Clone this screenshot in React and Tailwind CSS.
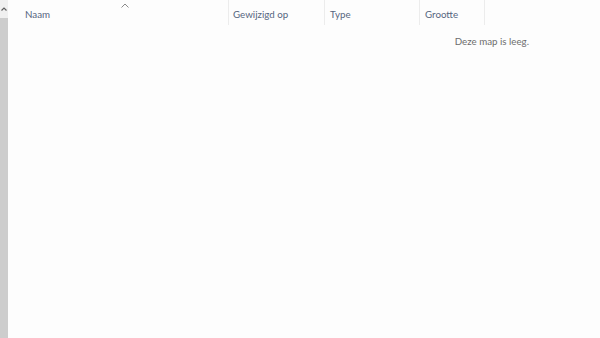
import React from 'react';

const columns = [
  { label: 'Naam', width: 'w-[221px]', pad: 'pl-[17px]' },
  { label: 'Gewijzigd op', width: 'w-[96px]', pad: 'pl-[4px]' },
  { label: 'Type', width: 'w-[95px]', pad: 'pl-[5px]' },
  { label: 'Grootte', width: 'w-[65px]', pad: 'pl-[5px]' },
];

export default function App() {
  return (
    <div className="flex h-[338px] w-[600px] bg-[#fdfdfd] font-['Lato','Noto_Sans',sans-serif]">
      {/* scrollbar */}
      <div className="flex w-[8px] flex-col bg-[#f0f0f0]">
        <div className="flex h-[18px] items-start justify-center pt-[7px]">
          <svg width="6" height="4" viewBox="0 0 6 4">
            <path d="M0.5 3.5 L3 1 L5.5 3.5" fill="none" stroke="#606060" strokeWidth="1.2" />
          </svg>
        </div>
        <div className="flex-1 bg-[#cdcdcd]" />
      </div>

      <div className="flex flex-1 flex-col">
        <div className="relative flex h-[25px]">
          {columns.map((c) => (
            <div
              key={c.label}
              className={`${c.width} ${c.pad} flex items-center border-r border-[#ececec] pt-[3px] text-[9.75px] text-[#56657f]`}
            >
              {c.label}
            </div>
          ))}
          <svg className="absolute left-[113px] top-[3px]" width="8" height="5" viewBox="0 0 8 5">
            <path d="M0.5 4.5 L4 1 L7.5 4.5" fill="none" stroke="#8a8a8a" strokeWidth="1" />
          </svg>
        </div>
        <div className="flex justify-end pr-[71px] pt-[9px] text-[9.75px] text-[#6d6d6d]">
          Deze map is leeg.
        </div>
      </div>
    </div>
  );
}
